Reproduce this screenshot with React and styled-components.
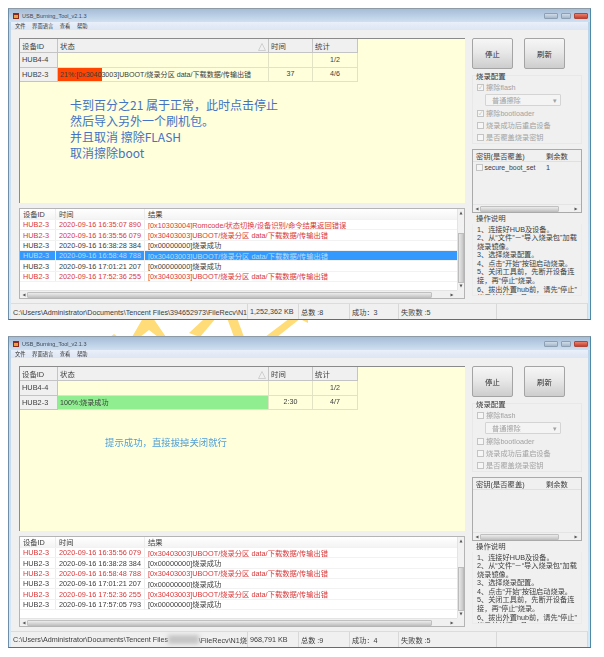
import React from "react";
import styled, {createGlobalStyle} from "styled-components";

const GlobalStyle = createGlobalStyle`
    html, body {
        margin: 0;
        padding: 0;
        background: #fff;
    }
`

const FONT = `"Liberation Sans", "Noto Sans CJK SC", sans-serif`

const Page = styled.div`
    position: relative;
    width: 604px;
    height: 657px;
    overflow: hidden;
    padding: 8px 0 0 8px;
    box-sizing: border-box;
    display: flex;
    flex-direction: column;
    gap: 16px;
    font-family: ${FONT};
    font-size: 7.3px;
    color: #3c3c3c;
    filter: blur(0.4px);
`

const Watermark = styled.svg`
    position: absolute;
    left: 0;
    top: 0;
    width: 604px;
    height: 657px;
`

const Win = styled.div`
    position: relative;
    width: 583px;
    height: 312px;
    box-sizing: border-box;
    border-top: 1px solid #8e9aa6;
    border-bottom: 1px solid #3f7a8c;
    border-left: 1px solid #6f8ea8;
    border-right: 1px solid #4d8aa8;
    background: linear-gradient(#bcd3e9, #d8e8f5);
    padding: 0 2px 0 2px;
    display: flex;
    flex-direction: column;
`

const TitleBar = styled.div`
    height: 13px;
    flex: none;
    display: flex;
    align-items: center;
    gap: 3px;
    padding: 0 2px 0 2px;
    margin: 0 -2px;
    background: linear-gradient(#a6bdd8, #cfe0f0);
    font-size: 5.5px;
    color: #3c4a58;
`

const AppIcon = styled.svg`
    width: 6px;
    height: 6px;
    margin-left: 2px;
`

const Controls = styled.div`
    margin-left: auto;
    display: flex;
    gap: 3px;
`

const CtrlBtn = styled.div`
    width: ${p => p.$w}px;
    height: 6px;
    box-sizing: border-box;
    border: 1px solid ${p => p.$close ? "#b0453a" : "#8d9fb3"};
    background: ${p => p.$close ? "linear-gradient(#e8806c, #c8402e)" : "linear-gradient(#cfdbe8, #a6b8cc)"};
    border-radius: 1px;
`

const MenuBar = styled.div`
    height: 8px;
    flex: none;
    display: flex;
    align-items: center;
    gap: 6.5px;
    padding-left: 4px;
    background: linear-gradient(#eaf0fa, #dde5f3);
    font-size: 5.3px;
    color: #333;
`

const Body = styled.div`
    flex: 1;
    min-height: 0;
    background: #f0f0f0;
    padding: 8px 0 5px 8px;
    display: grid;
    grid-template-columns: 446px 1fr;
    column-gap: 7px;
`

const LeftCol = styled.div`
    display: flex;
    flex-direction: column;
    gap: 5px;
    min-height: 0;
`

const DevicePane = styled.div`
    height: 165px;
    flex: none;
    box-sizing: border-box;
    border-top: 1px solid #8a8a8a;
    border-left: 1px solid #8a8a8a;
    background: #ffffdc;
    overflow: hidden;
`

const DeviceRow = styled.div`
    display: grid;
    grid-template-columns: 38px 211px 44px 45px;
    width: 338px;
    height: ${p => p.$head ? 14 : 14.5}px;
`

const Cell = styled.div`
    position: relative;
    display: flex;
    align-items: center;
    justify-content: ${p => p.$center ? "center" : "flex-start"};
    box-sizing: border-box;
    padding: 0 2px;
    white-space: nowrap;
    overflow: hidden;
    background: ${p => p.$gray ? "#f0f0f0" : "transparent"};
    border-right: 1px solid ${p => p.$gray ? "#c4c4c4" : "#e2e2c4"};
    border-bottom: 1px solid ${p => p.$gray ? "#c4c4c4" : "#e2e2c4"};
    font-size: ${p => p.$gray ? 7.4 : 7.1}px;
`

const Progress = styled.div`
    position: absolute;
    left: 0;
    top: 0;
    bottom: 0;
    background: ${p => p.$color};
`

const CellText = styled.span`
    position: relative;
`

const SortMark = styled.svg`
    position: absolute;
    right: 2px;
    top: 4px;
    width: 8px;
    height: 8px;
`

const Note = styled.div`
    margin-top: ${p => p.$top}px;
    padding-left: ${p => p.$left}px;
    font-family: "Noto Sans CJK SC", sans-serif;
    font-size: ${p => p.$size}px;
    line-height: 16px;
    color: ${p => p.$color};
    white-space: nowrap;
`

const LogPane = styled.div`
    height: 91px;
    flex: none;
    box-sizing: border-box;
    border: 1px solid #b4b4b4;
    background: #fff;
    display: grid;
    grid-template-columns: 1fr 7px;
    grid-template-rows: 1fr 8px;
    overflow: hidden;
`

const LogList = styled.div`
    min-width: 0;
    min-height: 0;
    overflow: hidden;
`

const LogRow = styled.div`
    display: grid;
    grid-template-columns: 36px 89px 1fr;
    height: ${p => p.$head ? 11 : 10.35}px;
    align-items: center;
    white-space: nowrap;
    font-size: 7.3px;
    box-sizing: border-box;
    border-bottom: 1px solid #f2f2f2;
    color: ${p => p.$selected ? "#bcdcf8" : p.$error ? "#d9383a" : "#3c3c3c"};
    background: ${p => p.$selected ? "#3399ff" : p.$head ? "linear-gradient(#fff, #f4f4f4)" : "#fff"};
`

const LogCell = styled.div`
    padding-left: 3px;
    height: 100%;
    display: flex;
    align-items: center;
    box-sizing: border-box;
    border-right: 1px solid ${p => p.$last ? "transparent" : "#ececec"};
    overflow: hidden;
`

const VScroll = styled.div`
    position: relative;
    display: flex;
    flex-direction: column;
    justify-content: space-between;
    align-items: center;
    padding: 2px 0;
    background: #f2f2f2;
    border-left: 1px solid #e4e4e4;
`

const VThumb = styled.div`
    position: absolute;
    left: 0;
    right: 0;
    background: linear-gradient(90deg, #e8e8e8, #c8c8c8);
    border: 1px solid #bcbcbc;
    box-sizing: border-box;
`

const HScroll = styled.div`
    position: relative;
    display: flex;
    align-items: center;
    gap: 1px;
    padding: 0 3px 0 2px;
    background: #f0f0f0;
    border-top: 1px solid #e4e4e4;
`

const HThumb = styled.div`
    height: 6px;
    width: ${p => p.$w}px;
    background: linear-gradient(#ececec, #c6c6c6);
    border: 1px solid #c0c0c0;
    box-sizing: border-box;
    border-radius: 1px;
`

const Arrow = styled.span`
    width: 4px;
    height: 4px;
    flex: none;
    margin-left: ${p => p.$end ? "auto" : 0};
`

const Corner = styled.div`
    background: #f0f0f0;
`

const RightCol = styled.div`
    display: flex;
    flex-direction: column;
    width: 110px;
    min-height: 0;
`

const Buttons = styled.div`
    display: flex;
    gap: 11px;
    flex: none;
`

const Button = styled.div`
    width: 41px;
    height: 31px;
    box-sizing: border-box;
    display: flex;
    align-items: center;
    justify-content: center;
    border: 1px solid #a4a4a4;
    border-radius: 2px;
    background: linear-gradient(#f6f6f6, #e8e8e8 45%, #cdcdcd);
    font-size: 7.4px;
    color: #2c2c2c;
`

const Group = styled.div`
    position: relative;
    margin-top: 6px;
    height: 69px;
    flex: none;
    box-sizing: border-box;
    border: 1px solid #e8e8e8;
    padding: 4px 0 0 4px;
    color: #a2a2a2;
    font-size: 7.2px;
`

const GroupTitle = styled.div`
    margin: -8px 0 0 -1px;
    height: 9px;
    line-height: 9px;
    color: #333;
    font-size: 7.4px;
`

const Check = styled.div`
    display: flex;
    align-items: center;
    gap: 2px;
    height: 12px;
`

const Box = styled.span`
    width: 5px;
    height: 5px;
    flex: none;
    border: 1px solid #c4c4c4;
    background: #f6f6f6;
    display: flex;
    align-items: center;
    justify-content: center;
    font-size: 5px;
    line-height: 5px;
    color: #aaa;
`

const Select = styled.div`
    margin: 1px 0 1px 8px;
    width: 76px;
    height: 12px;
    box-sizing: border-box;
    padding: 0 3px 0 6px;
    display: flex;
    align-items: center;
    justify-content: space-between;
    border: 1px solid #d4d4d4;
    border-radius: 1px;
    background: #f4f4f4;
`

const KeyList = styled.div`
    margin-top: 5px;
    height: 64px;
    flex: none;
    box-sizing: border-box;
    border: 1px solid #aaa;
    background: #f0f0f0;
    display: grid;
    grid-template-rows: 1fr 8px;
    overflow: hidden;
`

const KeyItems = styled.div`
    min-height: 0;
    overflow: hidden;
`

const KeyRow = styled.div`
    display: grid;
    grid-template-columns: 70px 1fr;
    align-items: center;
    height: 11px;
    padding-left: 3px;
    font-size: 7.3px;
    border-bottom: 1px solid ${p => p.$head ? "#e0e0e0" : "transparent"};
`

const KeyName = styled.div`
    display: flex;
    align-items: center;
    gap: 1.5px;
    font-size: 6.9px;
`

const Help = styled.div`
    margin-top: 1px;
    flex: 1;
    min-height: 0;
    box-sizing: border-box;
    overflow: hidden;
`

const HelpBody = styled.div`
    padding: 1.5px 0 0 4px;
    height: 72px;
    overflow: hidden;
    border: 1px solid #ebebeb;
    border-top: 0;
    box-sizing: border-box;
`

const HelpLine = styled.div`
    height: 8.6px;
    line-height: 8.6px;
    white-space: nowrap;
    font-size: 7.2px;
`

const HelpTitle = styled.div`
    padding-left: 4px;
    height: 10px;
    line-height: 10px;
    font-size: 7.4px;
`

const StatusBar = styled.div`
    height: 15px;
    flex: none;
    display: flex;
    background: #f0f0f0;
    border-top: 1px solid #dcdcdc;
    font-size: 7.2px;
`

const StatusCell = styled.div`
    width: ${p => p.$w}px;
    flex: ${p => p.$w ? "none" : 1};
    box-sizing: border-box;
    display: flex;
    align-items: center;
    padding-left: 2px;
    white-space: nowrap;
    overflow: hidden;
    border-right: 1px solid #d8d8d8;
`

const Blurred = styled.span`
    display: inline-block;
    width: ${p => p.$w}px;
    height: 9px;
    background: #c4c4c4;
    filter: blur(2px);
`

const ERR = "[0x30403003]UBOOT/烧录分区 data/下载数据/传输出错"
const OK = "[0x00000000]烧录成功"

const windows = [
    {
        progress: {pct: 21, color: "#ff4500", text: `21%:${ERR}`},
        time: "37",
        stat: "4/6",
        note: {top: 15, left: 50, size: 12, color: "#4472c4", lines: ["卡到百分之21 属于正常，此时点击停止", "然后导入另外一个刷机包。", "并且取消 擦除FLASH", "取消擦除boot"]},
        checked: true,
        keys: true,
        thumb: {top: 24, height: 50},
        logs: [
            ["2020-09-16 16:35:07 890", "[0x10303004]Romcode/状态切换/设备识别/命令结果返回错误", true],
            ["2020-09-16 16:35:56 079", ERR, true],
            ["2020-09-16 16:38:28 384", OK, false],
            ["2020-09-16 16:58:48 788", ERR, true, true],
            ["2020-09-16 17:01:21 207", OK, false],
            ["2020-09-16 17:52:36 255", ERR, true],
        ],
        size: "1,252,362 KB",
        total: "总数 :8",
        success: "成功：3",
        path: <>C:\Users\Administrator\Documents\Tencent Files\394652973\FileRecv\N1烧</>,
    },
    {
        progress: {pct: 100, color: "#90ee90", text: "100%:烧录成功"},
        time: "2:30",
        stat: "4/7",
        note: {top: 24, left: 85, size: 9.4, color: "#4f9fd8", lines: ["提示成功，直接拔掉关闭就行"]},
        checked: false,
        keys: false,
        thumb: {top: 30, height: 44},
        logs: [
            ["2020-09-16 16:35:56 079", ERR, true],
            ["2020-09-16 16:38:28 384", OK, false],
            ["2020-09-16 16:58:48 788", ERR, true],
            ["2020-09-16 17:01:21 207", OK, false],
            ["2020-09-16 17:52:36 255", ERR, true],
            ["2020-09-16 17:57:05 793", OK, false],
        ],
        size: "968,791 KB",
        total: "总数 :9",
        success: "成功：4",
        path: <>C:\Users\Administrator\Documents\Tencent Files<Blurred $w={40} />\FileRecv\N1烧</>,
    },
]

const helpLines = [
    "1、连接好HUB及设备。",
    "2、从“文件”－“导入烧录包”加载",
    "烧录镜像。",
    "3、选择烧录配置。",
    "4、点击“开始”按钮启动烧录。",
    "5、关闭工具前，先断开设备连",
    "接，再“停止”烧录。",
    "6、拔出外置hub前，请先“停止”",
    "烧录并关闭工具。",
]

const ARROWS = {
    left: "M3.5 0.5 L0.5 2 L3.5 3.5 Z",
    right: "M0.5 0.5 L3.5 2 L0.5 3.5 Z",
    up: "M0.5 3.5 L2 0.5 L3.5 3.5 Z",
    down: "M0.5 0.5 L2 3.5 L3.5 0.5 Z",
}

function ScrollArrow({dir, end}) {
    return (
        <Arrow as="svg" viewBox="0 0 4 4" $end={end}>
            <path d={ARROWS[dir]} fill="#555" />
        </Arrow>
    )
}

function CheckItem({checked, children}) {
    return (
        <Check>
            <Box>{checked ? "✓" : ""}</Box>
            {children}
        </Check>
    )
}

function ToolWindow({data}) {
    return (
        <Win>
            <TitleBar>
                <AppIcon viewBox="0 0 6 6">
                    <rect width="6" height="6" fill="#8a2a1a" />
                    <rect x="1" y="2" width="4" height="3" fill="#e8a040" />
                </AppIcon>
                USB_Burning_Tool_v2.1.3
                <Controls>
                    <CtrlBtn $w={14} />
                    <CtrlBtn $w={10} />
                    <CtrlBtn $w={14} $close />
                </Controls>
            </TitleBar>
            <MenuBar>
                <span>文件</span>
                <span>界面语言</span>
                <span>查看</span>
                <span>帮助</span>
            </MenuBar>
            <Body>
                <LeftCol>
                    <DevicePane>
                        <DeviceRow $head>
                            <Cell $gray>设备ID</Cell>
                            <Cell $gray>
                                状态
                                <SortMark viewBox="0 0 8 8">
                                    <path d="M4 0.5 L7.5 7.5 L0.5 7.5 Z" fill="none" stroke="#c8c8c8" strokeWidth="0.8" />
                                </SortMark>
                            </Cell>
                            <Cell $gray>时间</Cell>
                            <Cell $gray>统计</Cell>
                        </DeviceRow>
                        <DeviceRow>
                            <Cell $gray>HUB4-4</Cell>
                            <Cell />
                            <Cell />
                            <Cell $center>1/2</Cell>
                        </DeviceRow>
                        <DeviceRow>
                            <Cell $gray>HUB2-3</Cell>
                            <Cell>
                                <Progress $color={data.progress.color} style={{width: `${data.progress.pct}%`}} />
                                <CellText>{data.progress.text}</CellText>
                            </Cell>
                            <Cell $center>{data.time}</Cell>
                            <Cell $center>{data.stat}</Cell>
                        </DeviceRow>
                        <Note $top={data.note.top} $left={data.note.left} $size={data.note.size} $color={data.note.color}>
                            {data.note.lines.map(line => <div key={line}>{line}</div>)}
                        </Note>
                    </DevicePane>
                    <LogPane>
                        <LogList>
                            <LogRow $head>
                                <LogCell>设备ID</LogCell>
                                <LogCell>时间</LogCell>
                                <LogCell $last>结果</LogCell>
                            </LogRow>
                            {data.logs.map(([time, result, error, selected]) => (
                                <LogRow key={time} $error={error} $selected={selected}>
                                    <LogCell>HUB2-3</LogCell>
                                    <LogCell>{time}</LogCell>
                                    <LogCell $last>{result}</LogCell>
                                </LogRow>
                            ))}
                        </LogList>
                        <VScroll>
                            <ScrollArrow dir="up" />
                            <VThumb style={{top: data.thumb.top, height: data.thumb.height}} />
                            <ScrollArrow dir="down" />
                        </VScroll>
                        <HScroll>
                            <ScrollArrow dir="left" />
                            <HThumb $w={405} />
                            <ScrollArrow dir="right" $end end />
                        </HScroll>
                        <Corner />
                    </LogPane>
                </LeftCol>
                <RightCol>
                    <Buttons>
                        <Button>停止</Button>
                        <Button>刷新</Button>
                    </Buttons>
                    <Group>
                        <GroupTitle>烧录配置</GroupTitle>
                        <CheckItem checked={data.checked}>擦除flash</CheckItem>
                        <Select>普通擦除<span>▾</span></Select>
                        <CheckItem checked={data.checked}>擦除bootloader</CheckItem>
                        <CheckItem>烧录成功后重启设备</CheckItem>
                        <CheckItem>是否覆盖烧录密钥</CheckItem>
                    </Group>
                    <KeyList>
                        <KeyItems>
                            <KeyRow $head>
                                <div>密钥(是否覆盖)</div>
                                <div>剩余数</div>
                            </KeyRow>
                            {data.keys && (
                                <KeyRow>
                                    <KeyName><Box />secure_boot_set</KeyName>
                                    <div>1</div>
                                </KeyRow>
                            )}
                        </KeyItems>
                        <HScroll>
                            <ScrollArrow dir="left" />
                            <HThumb $w={79} />
                            <ScrollArrow dir="right" end />
                        </HScroll>
                    </KeyList>
                    <Help>
                        <HelpTitle>操作说明</HelpTitle>
                        <HelpBody>
                            {helpLines.map(line => <HelpLine key={line}>{line}</HelpLine>)}
                        </HelpBody>
                    </Help>
                </RightCol>
            </Body>
            <StatusBar>
                <StatusCell $w={237}>{data.path}</StatusCell>
                <StatusCell $w={51}>{data.size}</StatusCell>
                <StatusCell $w={51}>{data.total}</StatusCell>
                <StatusCell $w={49}>{data.success}</StatusCell>
                <StatusCell $w={98}>失败数 :5</StatusCell>
                <StatusCell />
            </StatusBar>
        </Win>
    )
}

function App() {
    return (
        <>
            <GlobalStyle />
            <Page>
                <Watermark viewBox="0 0 604 657">
                    <g fill="#ffdc78">
                        <path d="M143 318 L153 318 L166 337 L158 337 L149 330 L140 337 L132 337 Z" />
                        <path d="M110 337 L114 334 L118 337 Z" />
                        <path d="M205 318 L216 318 L200 337 L189 333 Z" />
                        <path d="M227 318 L237 318 L244 337 L234 337 Z" />
                        <path d="M290 318 L301 318 L277 337 L265 337 Z" />
                        <path d="M298 318 L308 318 L308 323 Z" />
                    </g>
                </Watermark>
                {windows.map(win => <ToolWindow key={win.size} data={win} />)}
            </Page>
        </>
    )
}

export default App
